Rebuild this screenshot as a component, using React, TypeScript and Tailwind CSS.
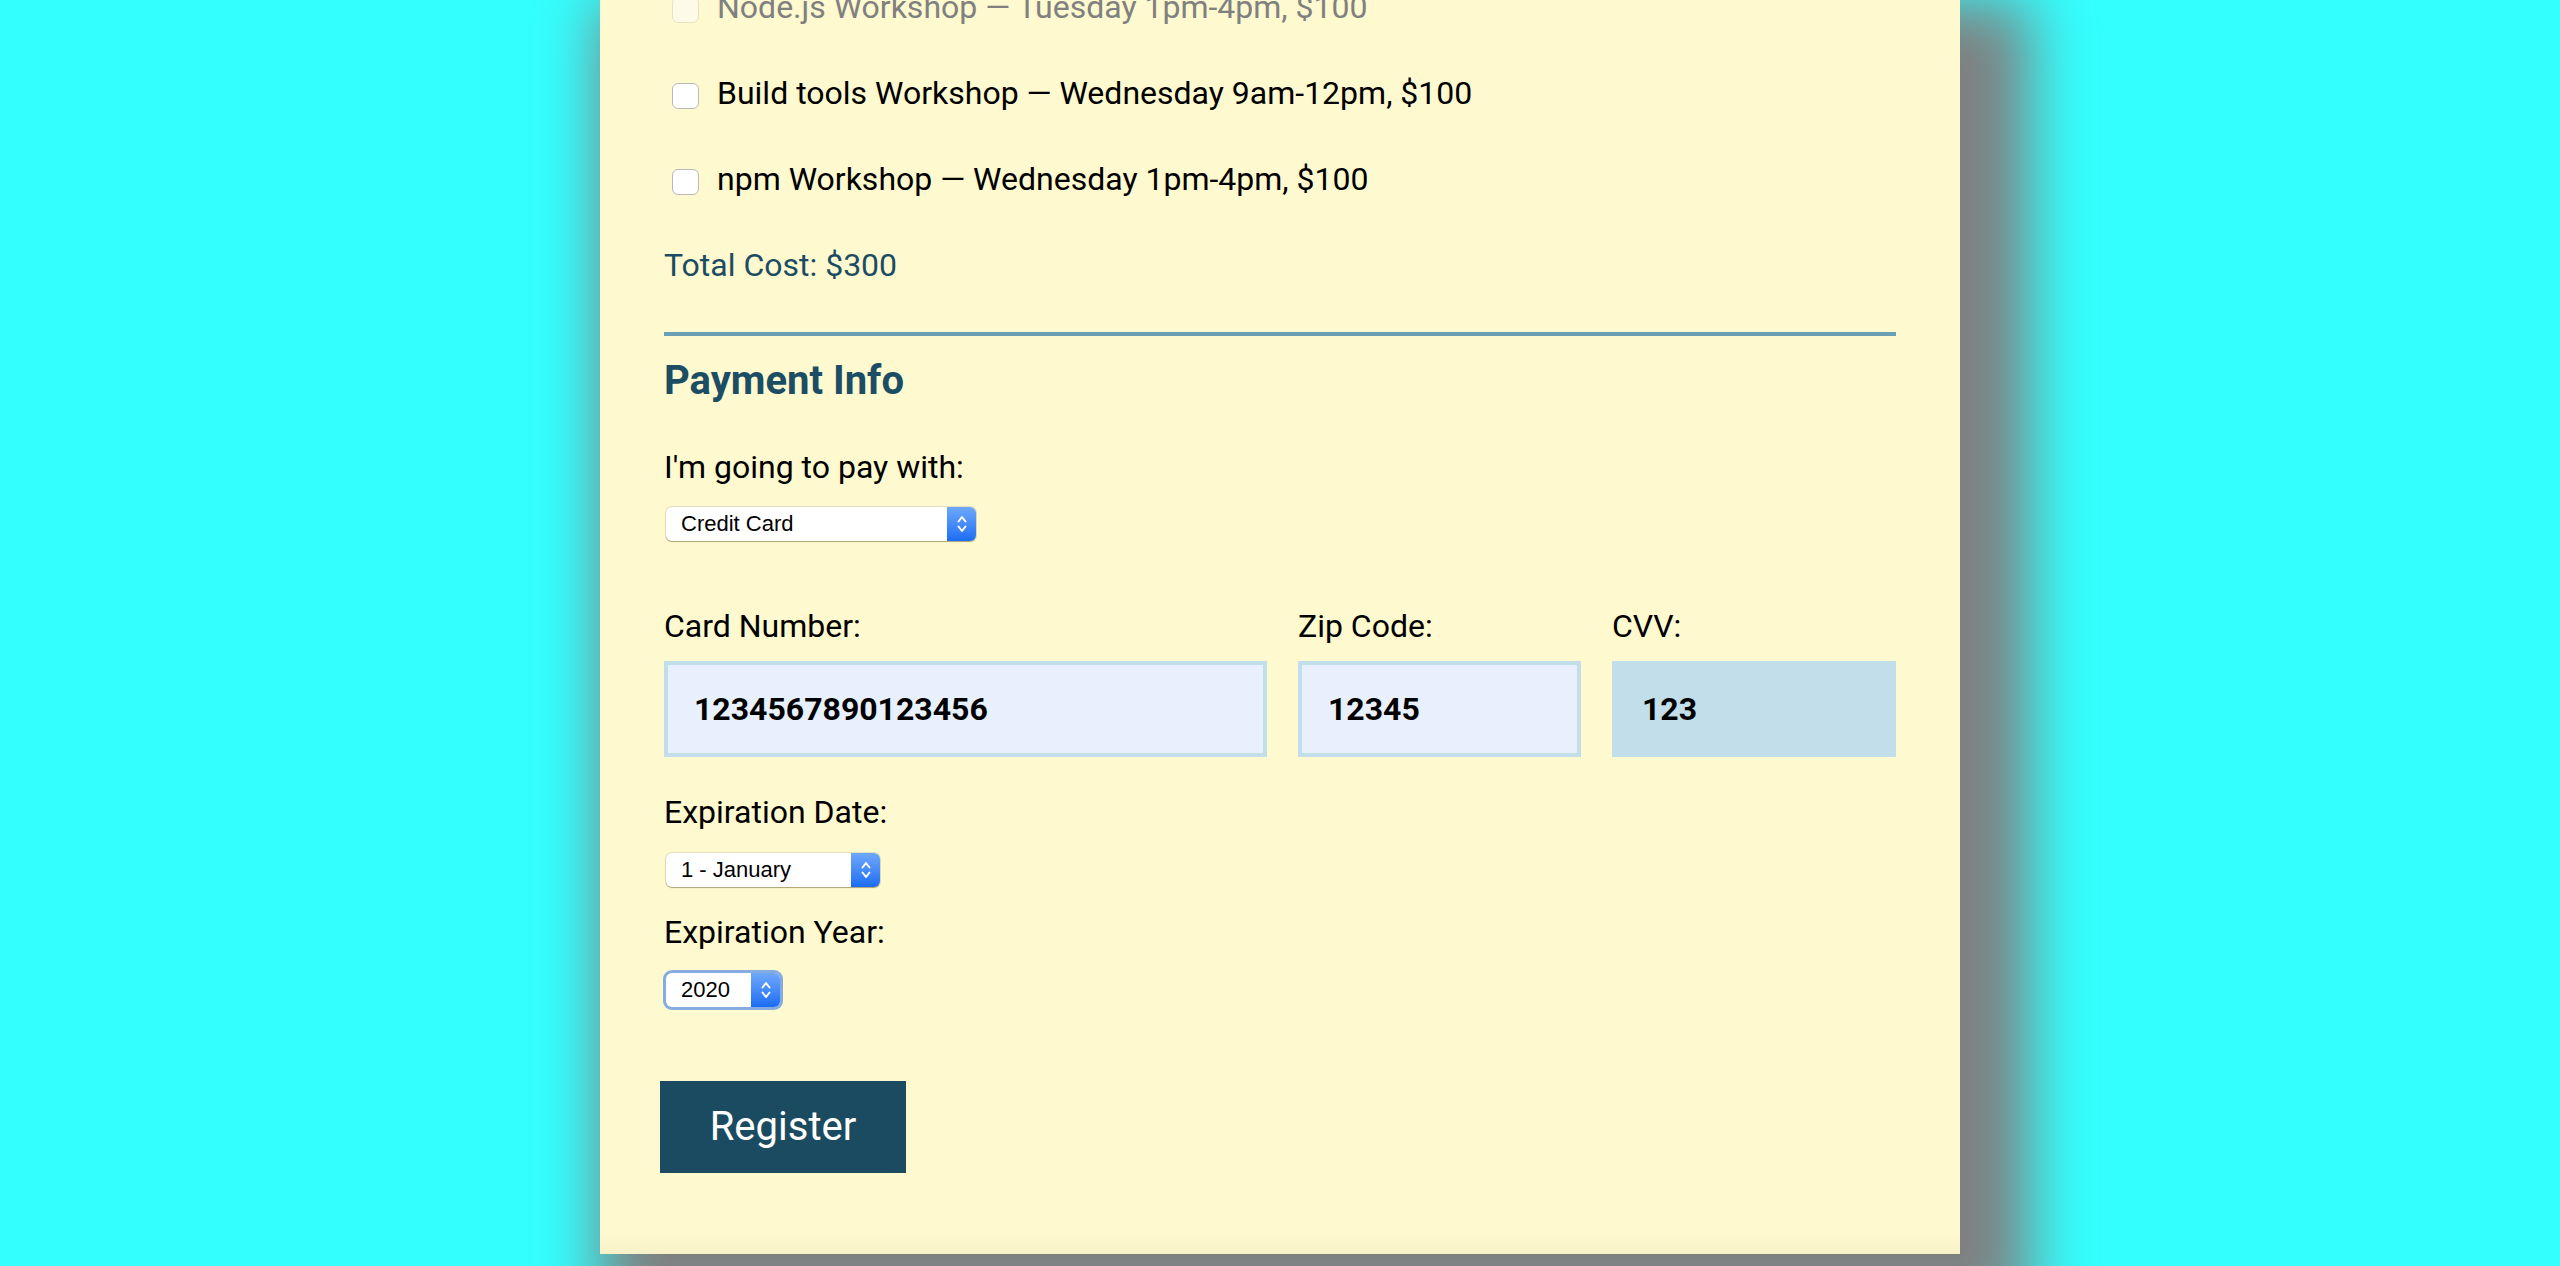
import React from "react"

const workshops = [
  { label: "Node.js Workshop — Tuesday 1pm-4pm, $100", disabled: true },
  { label: "Build tools Workshop — Wednesday 9am-12pm, $100", disabled: false },
  { label: "npm Workshop — Wednesday 1pm-4pm, $100", disabled: false },
]

function Chevrons() {
  return (
    <svg width="12" height="22" viewBox="0 0 12 22" fill="none" stroke="white" strokeWidth={2} strokeLinecap="round" strokeLinejoin="round">
      <path d="M2.5 8.5 L6 4 L9.5 8.5" />
      <path d="M2.5 13.5 L6 18 L9.5 13.5" />
    </svg>
  )
}

function MacSelect({ value, width, focused }: { value: string; width: string; focused?: boolean }) {
  return (
    <div
      className={`ml-[2px] flex h-[34px] ${width} rounded-[6px] bg-white shadow-[0_0_0_1px_rgba(0,0,0,0.1),0_1px_1px_rgba(120,105,40,0.45)] ${
        focused ? "ring-[3px] ring-[#85abe0]" : ""
      }`}
    >
      <span className="flex-1 pl-[15px] font-['Liberation_Sans',Arial,sans-serif] text-[22px] leading-[34px] text-black">
        {value}
      </span>
      <div className="flex w-[29px] items-center justify-center rounded-r-[6px] bg-gradient-to-b from-[#6ea8fa] to-[#1a6cf4]">
        <Chevrons />
      </div>
    </div>
  )
}

function Field({ label, value, filled }: { label: string; value: string; filled?: boolean }) {
  return (
    <div className="flex flex-col gap-[15px]">
      <label className="text-[32px] leading-[40px] text-black">{label}</label>
      <input
        readOnly
        value={value}
        className={`h-[96px] w-full border-4 border-[#c1deea] px-[26px] text-[32px] font-bold text-black outline-none ${
          filled ? "bg-[#e8f0fe]" : "bg-[#c1deea]"
        }`}
      />
    </div>
  )
}

export default function App() {
  return (
    <div className="h-[1266px] overflow-hidden bg-[#33ffff] font-['Roboto',sans-serif]">
      <div className="mx-auto flex w-[1360px] flex-col bg-[#fef9ce] px-16 pb-[81px] shadow-[35px_35px_60px_35px_#808080,inset_0_-28px_28px_-28px_rgba(0,0,0,0.07)]">
        <div className="-mt-[13px] flex flex-col gap-[46px]">
          {workshops.map((w) => (
            <label key={w.label} className="flex items-start gap-[18px] pl-[8px]">
              <input
                type="checkbox"
                disabled={w.disabled}
                className={`mt-[10px] h-[26px] w-[27px] shrink-0 appearance-none rounded-[6px] border ${
                  w.disabled ? "border-[#e6e2c4] bg-[#fdfbe8]" : "border-[#b9b9b9] bg-white"
                }`}
              />
              <span className={`text-[32px] leading-[40px] ${w.disabled ? "text-[#808080]" : "text-black"}`}>
                {w.label}
              </span>
            </label>
          ))}
          <p className="text-[32px] leading-[40px] text-[#1b4c64]">Total Cost: $300</p>
        </div>

        <div className="mt-[47px] h-[4px] bg-[#6c9fb4]" />

        <h2 className="mt-[21px] text-[40px] font-bold leading-[48px] text-[#1b4d65]">Payment Info</h2>

        <p className="mt-[42px] text-[32px] leading-[40px] text-black">I'm going to pay with:</p>
        <div className="mt-[20px]">
          <MacSelect value="Credit Card" width="w-[310px]" />
        </div>

        <div className="mt-[65px] grid grid-cols-[603px_283px_284px] gap-x-[31px]">
          <Field label="Card Number:" value="1234567890123456" filled />
          <Field label="Zip Code:" value="12345" filled />
          <Field label="CVV:" value="123" />
        </div>

        <p className="mt-[35px] text-[32px] leading-[40px] text-black">Expiration Date:</p>
        <div className="mt-[21px]">
          <MacSelect value="1 - January" width="w-[214px]" />
        </div>

        <p className="mt-[25px] text-[32px] leading-[40px] text-black">Expiration Year:</p>
        <div className="mt-[21px]">
          <MacSelect value="2020" width="w-[114px]" focused />
        </div>

        <div className="mt-[74px]">
          <button className="-ml-[4px] h-[92px] w-[246px] bg-[#1b4b61] text-[40px] text-white">Register</button>
        </div>
      </div>
    </div>
  )
}
